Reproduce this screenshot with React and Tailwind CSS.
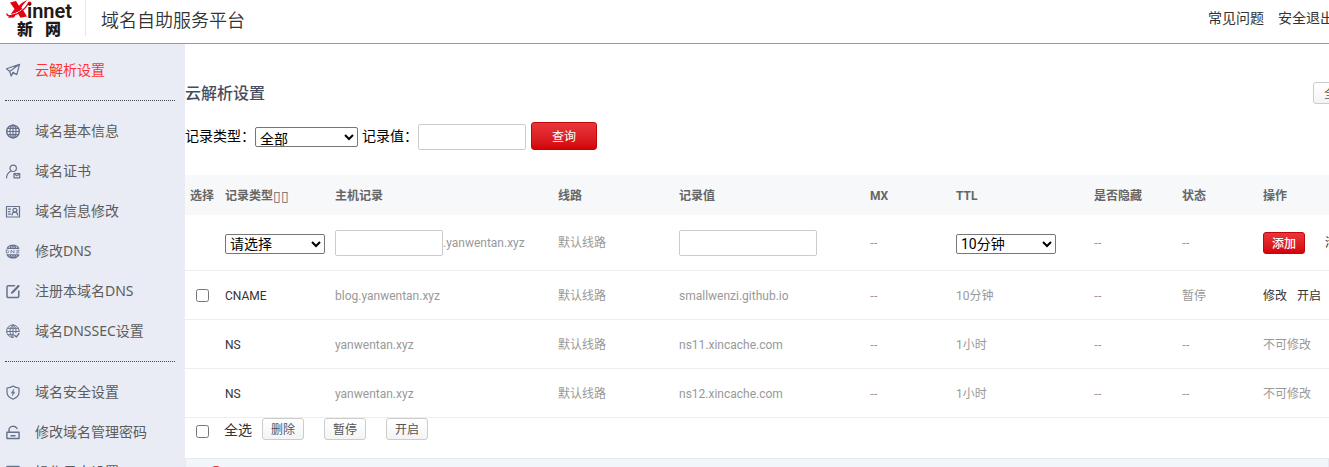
import React from "react";

const stroke = { fill: "none", stroke: "#66718c", strokeWidth: 1.2, strokeLinecap: "round", strokeLinejoin: "round" };

function Icon({ children }) {
  return (
    <svg viewBox="0 0 16 16" className="size-4 shrink-0" aria-hidden="true" {...stroke}>
      {children}
    </svg>
  );
}

const PlaneIcon = () => (
  <Icon>
    <path d="M1.500 6.800 14.500 2.300 11.800 12.600 7.800 10.400 6.200 14 4.600 9.400ZM14.500 2.300 4.600 9.400M6.200 14l2-3.300" />
  </Icon>
);
const GlobeIcon = () => (
  <Icon>
    <circle cx="8" cy="8.500" r="6.300" strokeWidth="1.500" />
    <ellipse cx="8" cy="8.500" rx="3" ry="6.300" />
    <path d="M8 2.200v12.600M1.700 8.500h12.600M2.800 5.300h10.400M2.800 11.700h10.400" />
  </Icon>
);
const UserIcon = () => (
  <Icon>
    <circle cx="8.200" cy="5.300" r="3.200" />
    <path d="M1.500 14.800c.3-3.400 1.800-5.400 4.500-6.500M9 10.500h5.700v4.300H9ZM9 10.700l2.800 2 2.900-2" />
  </Icon>
);
const CardIcon = () => (
  <Icon>
    <path d="M1.500 3.500h13v10.500h-13ZM3.500 6.200h2M3.500 8.700h1.500M3.500 11.200h2M7 12c.2-2 1.200-2.800 2.800-2.800s2.700.8 2.900 2.800" />
    <circle cx="9.900" cy="7.200" r="1.900" />
  </Icon>
);
const DnsIcon = () => (
  <Icon>
    <path d="M2.200 5.300C3.300 3.100 5.400 2 8 2s4.700 1.100 5.800 3.300M2.200 11.900c1.100 2 3.200 3.100 5.800 3.100s4.700-1.100 5.800-3.100M5 5.300C5.600 3.500 6.600 2.300 8 2.100c1.400.2 2.400 1.400 3 3.200M5 11.900c.6 1.800 1.600 2.800 3 3 1.400-.2 2.400-1.200 3-3M2.500 5.300h11M2.500 11.900h11M8 2.100v3M8 12v3" />
    <path strokeWidth=".8" d="M1.300 7.200V10h1c1.900 0 1.900-2.800 0-2.800ZM6 10V7.200L9 10V7.200M14.200 7.300c-2.800-.4-3.400 1-1.600 1.300 2.200.2 1.600 1.800-1.400 1.300" />
  </Icon>
);
const EditIcon = () => (
  <Icon>
    <path strokeWidth="1.500" d="M9.500 2.800H3.300A1.300 1.300 0 0 0 2 4.100v9.200a1.300 1.300 0 0 0 1.300 1.300h9.200a1.300 1.300 0 0 0 1.300-1.300V8" />
    <path strokeWidth="2.200" d="M13.500 3.100 7.600 9.300" />
    <path d="m6.600 10.300.4-1.200" />
  </Icon>
);
const GlobeCheckIcon = () => (
  <Icon>
    <path strokeWidth="1" d="M14.200 8A6.300 6.300 0 1 0 8 14.500M8 2.200v12.400M1.700 8.500h12.500M2.800 5.300h10.400M2.800 11.700h6M7.500 2.200c-3.300 3.300-3.300 9.200 0 12.300M8.500 2.200c2.300 2 3 4.600 2.400 7.600" />
    <path strokeWidth="1.300" d="m9.800 12.500 1.500 1.500 2.700-3.500" />
  </Icon>
);
const ShieldIcon = () => (
  <Icon>
    <path d="M8 2c1.800 1.300 3.700 1.800 6 2v4.300c0 3.200-2 5.300-6 6.900-4-1.600-6-3.700-6-6.900V4c2.300-.2 4.200-.7 6-2Z" />
    <path fill="#66718c" strokeWidth=".5" d="M8.700 5.500 6.300 9h1.500l-.5 2.700L9.800 8.200H8.300Z" />
  </Icon>
);
const LockIcon = () => (
  <Icon>
    <path strokeWidth="1.400" d="M1.900 8.200h12.200v6.300H1.900ZM4 8V6c0-4.300 6.300-5 8-1.500M6 11.700h4" />
  </Icon>
);
const LogIcon = () => (
  <Icon>
    <path strokeWidth="1.400" d="M2 2.500h12v12H2ZM5 6.500h6M5 9.500h6" />
  </Icon>
);

const menu = [
  [{ icon: PlaneIcon, label: "云解析设置", active: true }],
  [
    { icon: GlobeIcon, label: "域名基本信息" },
    { icon: UserIcon, label: "域名证书" },
    { icon: CardIcon, label: "域名信息修改" },
    { icon: DnsIcon, label: "修改DNS" },
    { icon: EditIcon, label: "注册本域名DNS" },
    { icon: GlobeCheckIcon, label: "域名DNSSEC设置" },
  ],
  [
    { icon: ShieldIcon, label: "域名安全设置" },
    { icon: LockIcon, label: "修改域名管理密码" },
    { icon: LogIcon, label: "操作日志设置" },
  ],
];

const records = [
  { type: "CNAME", host: "blog.yanwentan.xyz", value: "smallwenzi.github.io", ttl: "10分钟", status: "暂停", editable: true },
  { type: "NS", host: "yanwentan.xyz", value: "ns11.xincache.com", ttl: "1小时" },
  { type: "NS", host: "yanwentan.xyz", value: "ns12.xincache.com", ttl: "1小时" },
];

const Empty = () => <span className="font-['Noto_Sans',sans-serif] leading-3">--</span>;

function Logo() {
  return (
    <a href="#" aria-label="Xinnet 新网" className="h-9 w-[86px] shrink-0 border-r border-[#e6e6e6]">
      <svg viewBox="0 0 85 40" className="h-10 w-[85px]">
        <path d="M10 2.500 16 1l3 4.800C21.500 3 24 1 28 0c-3 2-5 4.500-6.500 7.500l5.500 9-6.500 1.200-3.500-5.700L14 17.500l-6 .2L14.500 9Z" fill="#e60012" />
        <path d="M10 14.500C17 14 23 10 26.500 4" fill="none" stroke="#fff" strokeWidth="1" />
        <path d="M7 13.500c-.5 2.500 3 3 7 1.500C20 13 25 9 28 4" fill="none" stroke="#e60012" strokeWidth="1.400" />
        <circle cx="29.500" cy="3.500" r="2" fill="#e60012" />
        <text x="27" y="18" fontSize="20" fontWeight="600" fontFamily="Roboto, sans-serif" fill="#231815">innet</text>
        <g fontSize="16" fontWeight="900" fontFamily="'Noto Sans CJK SC', sans-serif" fill="#231815">
          <text x="17" y="35">新</text>
          <text x="45" y="35">网</text>
        </g>
      </svg>
    </a>
  );
}

const select = "block h-5 rounded-[2px] border border-[#767676] bg-white text-sm leading-4 text-black";
const field = "rounded-[2px] border border-[#ccc] bg-white px-1 text-xs";
const grayButton =
  "h-[22px] shrink-0 rounded-[3px] border border-[#ccc] bg-linear-to-b from-white to-[#f4f4f4] pt-0.5 text-xs text-[#555]";
const redButton =
  "shrink-0 rounded-[3px] border border-[#c4050c] bg-linear-to-b from-[#e8353a] to-[#d20006] pt-0.5 text-white";

export default function App() {
  return (
    <div className="flex h-screen flex-col overflow-hidden bg-white font-['Noto_Sans','Noto_Sans_CJK_SC',sans-serif] text-[#333]">
      <header className="flex h-11 shrink-0 border-b border-[#999]">
        <Logo />
        <div className="flex min-w-0 flex-1 items-center justify-between pb-1 pl-[15px]">
          <h1 className="text-lg leading-9 font-[350]">域名自助服务平台</h1>
          <nav className="-mr-[5px] mb-1 flex shrink-0 gap-3.5 text-sm">
            <a href="#">常见问题</a>
            <a href="#">安全退出</a>
          </nav>
        </div>
      </header>

      <div className="flex min-h-0 flex-1">
        <aside className="w-[185px] shrink-0 overflow-hidden bg-[#e9ecf5] pt-1.5">
          {menu.map((group, i) => (
            <ul key={i}>
              {i > 0 && <li className="my-2.5 mr-2.5 ml-[5px] border-t border-dotted border-[#444]" />}
              {group.map(({ icon: ItemIcon, label, active }) => (
                <li key={label}>
                  <a
                    href="#"
                    className={`flex h-10 items-center gap-3.5 pl-[5px] text-sm ${active ? "text-[#ff3333]" : "text-[#5c5c5c]"}`}
                  >
                    <ItemIcon />
                    {label}
                  </a>
                </li>
              ))}
            </ul>
          ))}
        </aside>

        <main className="min-w-0 flex-1 overflow-hidden">
          <div className="flex items-center justify-between pt-[37px]">
            <h2 className="text-base leading-6 font-medium text-[#454c5f]">云解析设置</h2>
            <button type="button" className={`${grayButton} -mr-[54px] px-2.5`}>全部导出</button>
          </div>

          <form className="flex items-center pt-[17px] text-sm text-black">
            <label htmlFor="type">记录类型：</label>
            <select id="type" className={`${select} mt-0.5 mr-1 w-[103px]`}>
              <option>全部</option>
            </select>
            <label htmlFor="value">记录值：</label>
            <input id="value" type="text" className={`${field} mt-0.5 h-[26px] w-[108px]`} />
            <button type="button" className={`${redButton} ml-[5px] h-7 w-[66px] text-xs`}>查询</button>
          </form>

          <table className="mt-[25px] w-[1212px] table-fixed border-collapse text-left font-[Roboto,'Noto_Sans_CJK_SC',sans-serif] text-xs text-[#999]">
            <colgroup>
              <col className="w-[35px]" />
              <col className="w-[110px]" />
              <col className="w-[223px]" />
              <col className="w-[121px]" />
              <col className="w-[191px]" />
              <col className="w-[86px]" />
              <col className="w-[138px]" />
              <col className="w-[88px]" />
              <col className="w-[81px]" />
              <col />
            </colgroup>
            <thead className="bg-[#f6f8fa] text-[#666]">
              <tr className="h-10 [&>th]:pt-0.5 [&>th]:pl-[5px] [&>th]:font-bold">
                <th>选择</th>
                <th>
                  <span className="flex items-center">
                    记录类型
                    <span className="font-['Noto_Sans',sans-serif] text-sm leading-4 font-normal">▯▯</span>
                  </span>
                </th>
                <th>主机记录</th>
                <th>线路</th>
                <th>记录值</th>
                <th>MX</th>
                <th>TTL</th>
                <th>是否隐藏</th>
                <th>状态</th>
                <th>操作</th>
              </tr>
            </thead>
            <tbody className="[&_td]:pt-0.5 [&_td]:pl-[5px] [&>tr]:border-b [&>tr]:border-[#eee]">
              <tr className="h-[55px]">
                <td />
                <td>
                  <select aria-label="记录类型" className={`${select} mt-0.5 w-[100px]`}>
                    <option>请选择</option>
                  </select>
                </td>
                <td>
                  <span className="flex items-center">
                    <input type="text" aria-label="主机记录" className={`${field} h-[26px] w-[108px]`} />
                    .yanwentan.xyz
                  </span>
                </td>
                <td>默认线路</td>
                <td><input type="text" aria-label="记录值" className={`${field} block h-[26px] w-[138px]`} /></td>
                <td><Empty /></td>
                <td>
                  <select aria-label="TTL" className={`${select} mt-0.5 w-[100px]`}>
                    <option>10分钟</option>
                  </select>
                </td>
                <td><Empty /></td>
                <td><Empty /></td>
                <td>
                  <span className="flex items-center gap-5">
                    <button type="button" className={`${redButton} h-[22px] w-[42px] font-medium`}>添加</button>
                    <a href="#" className="text-[#333]">清空</a>
                  </span>
                </td>
              </tr>
              {records.map((r) => (
                <tr key={r.value} className="h-[49px]">
                  <td>
                    {r.editable && <input type="checkbox" aria-label={r.host} className="ml-1.5 block size-[13px]" />}
                  </td>
                  <td className="text-[#333]">{r.type}</td>
                  <td>{r.host}</td>
                  <td>默认线路</td>
                  <td>{r.value}</td>
                  <td><Empty /></td>
                  <td>{r.ttl}</td>
                  <td><Empty /></td>
                  <td>{r.status ?? <Empty />}</td>
                  <td>
                    {r.editable ? (
                      <span className="flex gap-2.5 text-[#333]">
                        <a href="#">修改</a>
                        <a href="#">开启</a>
                        <a href="#">删除</a>
                      </span>
                    ) : (
                      "不可修改"
                    )}
                  </td>
                </tr>
              ))}
            </tbody>
          </table>

          <div className="flex pl-[11px]">
            <input id="all" type="checkbox" className="mt-[7px] size-[13px]" />
            <label htmlFor="all" className="ml-[15px] text-sm leading-6">全选</label>
            <div className="ml-2.5 flex gap-5">
              <button type="button" className={`${grayButton} px-2`}>删除</button>
              <button type="button" className={`${grayButton} px-2`}>暂停</button>
              <button type="button" className={`${grayButton} px-2`}>开启</button>
            </div>
          </div>

          <section className="mt-4 h-20 border border-[#e6eaf0] bg-[#f2f6fb] pt-[7px] pl-[23px]">
            <svg viewBox="0 0 14 14" className="size-3.5" aria-hidden="true">
              <circle cx="7" cy="7" r="7" fill="#e6231e" />
              <path d="M7 3v5M7 9.500v1.500" stroke="#fff" strokeWidth="1.600" />
            </svg>
          </section>
        </main>
      </div>
    </div>
  );
}
